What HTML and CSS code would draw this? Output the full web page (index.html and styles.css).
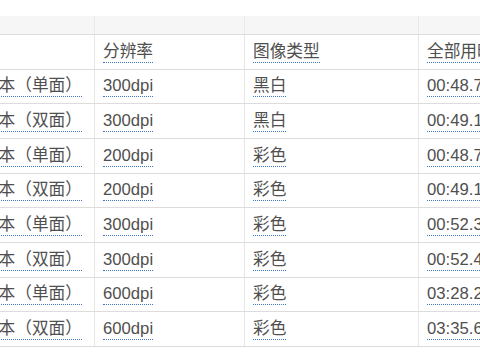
FILE: index.html
```html
<!DOCTYPE html>
<html lang="zh-CN">
<head>
<meta charset="utf-8">
<title>扫描速度测试</title>
<link rel="stylesheet" href="styles.css">
</head>
<body>
<div class="viewport">
  <table class="results">
    <colgroup>
      <col class="c1"><col class="c2"><col class="c3"><col class="c4">
    </colgroup>
    <thead>
      <tr class="group"><th></th><th></th><th></th><th></th></tr>
      <tr class="head">
        <th><span class="tip">样张</span></th>
        <th><span class="tip">分辨率</span></th>
        <th><span class="tip">图像类型</span></th>
        <th><span class="tip">全部用时(秒)</span></th>
      </tr>
    </thead>
    <tbody>
      <tr><td><span class="tip">A4文本（单面）</span></td><td><span class="tip">300dpi</span></td><td><span class="tip">黑白</span></td><td><span class="tip">00:48.72</span></td></tr>
      <tr><td><span class="tip">A4文本（双面）</span></td><td><span class="tip">300dpi</span></td><td><span class="tip">黑白</span></td><td><span class="tip">00:49.15</span></td></tr>
      <tr><td><span class="tip">A4文本（单面）</span></td><td><span class="tip">200dpi</span></td><td><span class="tip">彩色</span></td><td><span class="tip">00:48.76</span></td></tr>
      <tr><td><span class="tip">A4文本（双面）</span></td><td><span class="tip">200dpi</span></td><td><span class="tip">彩色</span></td><td><span class="tip">00:49.12</span></td></tr>
      <tr><td><span class="tip">A4文本（单面）</span></td><td><span class="tip">300dpi</span></td><td><span class="tip">彩色</span></td><td><span class="tip">00:52.31</span></td></tr>
      <tr><td><span class="tip">A4文本（双面）</span></td><td><span class="tip">300dpi</span></td><td><span class="tip">彩色</span></td><td><span class="tip">00:52.44</span></td></tr>
      <tr><td><span class="tip">A4文本（单面）</span></td><td><span class="tip">600dpi</span></td><td><span class="tip">彩色</span></td><td><span class="tip">03:28.25</span></td></tr>
      <tr><td><span class="tip">A4文本（双面）</span></td><td><span class="tip">600dpi</span></td><td><span class="tip">彩色</span></td><td><span class="tip">03:35.68</span></td></tr>
    </tbody>
  </table>
</div>
</body>
</html>
```

FILE: styles.css
```css
html, body {
  margin: 0;
  padding: 0;
  background: #ffffff;
}

.viewport {
  width: 480px;
  height: 360px;
  overflow: hidden;
  padding-top: 16px;
  box-sizing: border-box;
}

.results {
  /* horizontally scrolled view of a wider table */
  margin-left: -47.6px;
  border-collapse: collapse;
  table-layout: fixed;
  width: 680px;
  font-family: "Liberation Sans", "Noto Sans CJK SC", sans-serif;
  font-size: 16.7px;
  color: #4f4f4f;
}

.c1 { width: 141.6px; }
.c2 { width: 150px; }
.c3 { width: 174px; }
.c4 { width: 214.4px; }

.results th,
.results td {
  font-weight: normal;
  text-align: left;
  white-space: nowrap;
  overflow: hidden;
  line-height: 20px;
  padding: 6.6px 8px 7.07px 8px;
  border-bottom: 1px solid #dcdcdc;
  border-left: 1px solid #e6e6e6;
}

.results .group th {
  background: #f6f6f6;
  height: 18px;
  padding: 0;
  line-height: 18px;
  border-bottom: 1px solid #dcdcdc;
  border-left: 1px solid #e9e9e9;
}

.tip {
  border-bottom: 1px dotted #3a78c4;
  padding-bottom: 1px;
}
```
